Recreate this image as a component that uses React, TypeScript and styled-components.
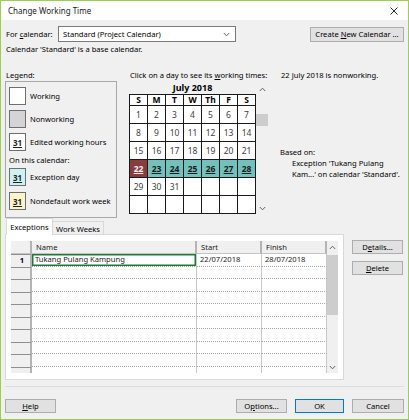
import React from "react";
import styled, { createGlobalStyle, css } from "styled-components";

const GlobalStyle = createGlobalStyle`
  html, body {
    margin: 0;
    padding: 0;
    background: #ffffff;
  }
  body {
    font-family: "Noto Sans", "Liberation Sans", Arial, sans-serif;
  }
`;

const Window = styled.div`
  width: 409px;
  height: 420px;
  box-sizing: border-box;
  border: 1px solid #9bcf53;
  background: #f0f0f0;
  display: flex;
  flex-direction: column;
  font-size: 7.6px;
  color: #000;
  overflow: hidden;
`;

const TitleBar = styled.div`
  height: 19px;
  flex: none;
  background: #ffffff;
  display: flex;
  align-items: center;
  justify-content: space-between;
  padding: 0 10px 0 7px;
  font-size: 8px;
  color: #1a1a1a;
`;

const Body = styled.div`
  flex: 1;
  display: flex;
  flex-direction: column;
  padding: 6px 4px 0 4px;
`;

const CalendarPicker = styled.div`
  display: flex;
  align-items: center;
  height: 16px;
`;

const FieldLabel = styled.span`
  margin-left: 1px;
  width: 52px;
`;

const Select = styled.div`
  width: 178px;
  height: 16px;
  box-sizing: border-box;
  background: #fff;
  border: 1px solid #7a7a7a;
  display: flex;
  align-items: center;
  justify-content: space-between;
  padding: 0 5px 0 4px;
`;

const Button = styled.div<{ $width?: number; $focused?: boolean; $height?: number }>`
  width: ${(p) => p.$width ?? 51}px;
  height: ${(p) => p.$height ?? 14}px;
  box-sizing: border-box;
  background: #e1e1e1;
  border: 1px solid ${(p) => (p.$focused ? "#0078d7" : "#adadad")};
  display: flex;
  align-items: center;
  justify-content: center;
  color: #000;
  flex: none;
  white-space: nowrap;
`;

const PushRight = styled.div`
  margin-left: auto;
`;

const InfoLine = styled.div`
  margin: 2px 0 0 1px;
  line-height: 10px;
`;

const MainArea = styled.div`
  display: flex;
  margin-top: 16px;
`;

const LegendColumn = styled.div`
  width: 112px;
  flex: none;
`;

const Caption = styled.div`
  line-height: 10px;
  padding-left: 1px;
`;

const LegendBox = styled.div`
  margin-top: 1px;
  height: 137px;
  box-sizing: border-box;
  border: 1px solid #a8a8a8;
  padding: 5px 3px 0 3px;
`;

const LegendItem = styled.div<{ $gap?: number }>`
  display: flex;
  align-items: center;
  gap: 4px;
  margin-top: ${(p) => p.$gap ?? 0}px;
  height: 18px;
`;

const Swatch = styled.div<{ $bg: string }>`
  width: 17px;
  height: 18px;
  box-sizing: border-box;
  border: 1px solid #6e6e6e;
  background: ${(p) => p.$bg};
  display: flex;
  align-items: center;
  justify-content: center;
  font-weight: bold;
  font-size: 8px;
  color: #1f1f1f;
  text-decoration: underline;
  text-decoration-thickness: 1px;
`;

const SubCaption = styled.div`
  margin-top: 4px;
  line-height: 10px;
`;

const CalendarColumn = styled.div`
  margin-left: 12px;
  width: 141px;
  flex: none;
`;

const CalendarRow = styled.div`
  display: flex;
  margin-top: 3px;
`;

const CalendarBlock = styled.div`
  width: 127px;
`;

const MonthTitle = styled.div`
  height: 11px;
  line-height: 10px;
  text-align: center;
  font-weight: bold;
  font-size: 9px;
`;

const MonthGrid = styled.div`
  display: grid;
  grid-template-columns: repeat(7, 17px);
  grid-template-rows: 10px repeat(6, 17px);
  gap: 1px;
  padding: 1px;
  background: #1a1a1a;
`;

const DayHead = styled.div`
  background: #fff;
  font-weight: bold;
  font-size: 8.5px;
  line-height: 10px;
  text-align: center;
`;

type DayKind = "normal" | "exception" | "selected";

const DayCell = styled.div<{ $kind: DayKind }>`
  background: #fff;
  font-size: 8.5px;
  line-height: 17px;
  text-align: center;
  color: #404040;
  ${(p) =>
    p.$kind === "exception" &&
    css`
      background: #73c1bc;
      color: #1a1a1a;
      font-weight: bold;
      text-decoration: underline;
    `}
  ${(p) =>
    p.$kind === "selected" &&
    css`
      background: #8b3b3b;
      color: #f4f4f4;
      font-weight: bold;
      text-decoration: underline;
    `}
`;

const ScrollBar = styled.div<{ $width: number }>`
  width: ${(p) => p.$width}px;
  display: flex;
  flex-direction: column;
  align-items: center;
  flex: none;
`;

const ScrollArrow = styled.div<{ $height: number }>`
  height: ${(p) => p.$height}px;
  width: 100%;
  display: flex;
  align-items: center;
  justify-content: center;
  flex: none;
`;

const ScrollThumb = styled.div<{ $top: number; $height: number }>`
  margin-top: ${(p) => p.$top}px;
  height: ${(p) => p.$height}px;
  width: 100%;
  background: #cdcdcd;
  flex: none;
`;

const ScrollSpacer = styled.div`
  flex: 1;
`;

const InfoColumn = styled.div`
  margin-left: 10px;
  flex: 1;
`;

const BasedOn = styled.div`
  margin-top: 67px;
  line-height: 11px;
`;

const Indented = styled.div`
  padding-left: 12px;
  line-height: 11px;
`;

const LowerArea = styled.div`
  display: flex;
`;

const TabsColumn = styled.div`
  width: 339px;
  flex: none;
`;

const TabStrip = styled.div`
  height: 16px;
  display: flex;
  align-items: flex-end;
  padding-left: 1px;
  position: relative;
  z-index: 1;
`;

const Tab = styled.div<{ $active?: boolean }>`
  box-sizing: border-box;
  border: 1px solid #d9d9d9;
  display: flex;
  align-items: center;
  justify-content: center;
  ${(p) =>
    p.$active
      ? css`
          width: 47px;
          height: 17px;
          margin-bottom: -1px;
          background: #fff;
          border-bottom: none;
        `
      : css`
          width: 51px;
          height: 13px;
          background: #f0f0f0;
          border-left: none;
          border-bottom: none;
          padding-top: 1px;
        `}
`;

const TabPanel = styled.div`
  height: 146px;
  box-sizing: border-box;
  background: #fff;
  border: 1px solid #d9d9d9;
  padding: 6px 4px 0 5px;
`;

const Table = styled.div`
  display: flex;
  height: 132px;
  overflow: hidden;
`;

const TableBody = styled.div`
  width: 316px;
  flex: none;
`;

const Row = styled.div<{ $header?: boolean }>`
  display: grid;
  grid-template-columns: 21px 165px 65px 65px;
  height: ${(p) => (p.$header ? 13 : 12.5)}px;
`;

const HeadCell = styled.div`
  background: #f0f0f0;
  border-right: 2px solid #b4b4b4;
  border-bottom: 1px solid #c4c4c4;
  box-sizing: border-box;
  padding-left: 4px;
  line-height: 12px;
  color: #1a1a1a;
`;

const RowHeadCell = styled.div`
  background: #f0f0f0;
  border-top: 1px solid #8f8f8f;
  border-right: 2px solid #b4b4b4;
  box-sizing: border-box;
  text-align: right;
  padding-right: 6px;
  font-weight: bold;
  line-height: 11px;
`;

const DataCell = styled.div<{ $selected?: boolean }>`
  border-bottom: 1px dotted #a8a8a8;
  border-right: 1px solid #c8c8c8;
  box-sizing: border-box;
  padding-left: 3px;
  line-height: 11px;
  color: #222;
  white-space: nowrap;
  overflow: hidden;
  ${(p) =>
    p.$selected &&
    css`
      box-shadow: inset 0 0 0 1.5px #1f7a3a;
    `}
`;

const TableScroll = styled(ScrollBar)`
  background: #f0f0f0;
`;

const SideButtons = styled.div`
  margin-left: 8px;
  padding-top: 22px;
  display: flex;
  flex-direction: column;
  gap: 7px;
`;

const Separator = styled.div`
  margin-top: 6px;
  height: 1px;
  background: #dcdcdc;
`;

const Footer = styled.div`
  margin-top: 12px;
  display: flex;
  gap: 8px;
`;

const Key = styled.span`
  text-decoration: underline;
`;

const Chevron = ({ up }: { up?: boolean }) => (
  <svg width="7" height="5" viewBox="0 0 7 5">
    <path
      d={up ? "M0.8 4 L3.5 1.2 L6.2 4" : "M0.8 1 L3.5 3.8 L6.2 1"}
      fill="none"
      stroke="#606060"
      strokeWidth="1"
    />
  </svg>
);

const CloseIcon = () => (
  <svg width="8" height="8" viewBox="0 0 8 8">
    <path d="M0.5 0.5 L7.5 7.5 M7.5 0.5 L0.5 7.5" stroke="#111" strokeWidth="0.9" />
  </svg>
);

const weekDays = ["S", "M", "T", "W", "Th", "F", "S"];

const days: (number | null)[] = Array.from({ length: 42 }, (_, i) =>
  i < 31 ? i + 1 : null
);

const dayKind = (d: number | null): DayKind => {
  if (d === 22) return "selected";
  if (d !== null && d > 22 && d <= 28) return "exception";
  return "normal";
};

const exceptions = [
  { name: "Tukang Pulang Kampung", start: "22/07/2018", finish: "28/07/2018" },
];

export default function App() {
  const rows = Array.from({ length: 10 }, (_, i) => exceptions[i]);

  return (
    <>
      <GlobalStyle />
      <Window>
        <TitleBar>
          <span>Change Working Time</span>
          <CloseIcon />
        </TitleBar>
        <Body>
          <CalendarPicker>
            <FieldLabel>
              For <Key>c</Key>alendar:
            </FieldLabel>
            <Select>
              <span>Standard (Project Calendar)</span>
              <Chevron />
            </Select>
            <PushRight />
            <Button $width={94} $height={15}>
              <span>
                Create <Key>N</Key>ew Calendar ...
              </span>
            </Button>
          </CalendarPicker>
          <InfoLine>Calendar 'Standard' is a base calendar.</InfoLine>

          <MainArea>
            <LegendColumn>
              <Caption>Legend:</Caption>
              <LegendBox>
                <LegendItem>
                  <Swatch $bg="#ffffff" />
                  <span>Working</span>
                </LegendItem>
                <LegendItem $gap={5}>
                  <Swatch $bg="#d4d4d4" />
                  <span>Nonworking</span>
                </LegendItem>
                <LegendItem $gap={5}>
                  <Swatch $bg="#ffffff">31</Swatch>
                  <span>Edited working hours</span>
                </LegendItem>
                <SubCaption>On this calendar:</SubCaption>
                <LegendItem $gap={3}>
                  <Swatch $bg="#cdf2f2">31</Swatch>
                  <span>Exception day</span>
                </LegendItem>
                <LegendItem $gap={6}>
                  <Swatch $bg="#fdf5c9">31</Swatch>
                  <span>Nondefault work week</span>
                </LegendItem>
              </LegendBox>
            </LegendColumn>

            <CalendarColumn>
              <Caption>
                Click on a day to see its <Key>w</Key>orking times:
              </Caption>
              <CalendarRow>
                <CalendarBlock>
                  <MonthTitle>July 2018</MonthTitle>
                  <MonthGrid>
                    {weekDays.map((w, i) => (
                      <DayHead key={"h" + i}>{w}</DayHead>
                    ))}
                    {days.map((d, i) => (
                      <DayCell key={i} $kind={dayKind(d)}>
                        {d ?? ""}
                      </DayCell>
                    ))}
                  </MonthGrid>
                </CalendarBlock>
                <ScrollBar $width={12}>
                  <ScrollArrow $height={12}>
                    <Chevron up />
                  </ScrollArrow>
                  <ScrollThumb $top={19} $height={12} />
                  <ScrollSpacer />
                  <ScrollArrow $height={12}>
                    <Chevron />
                  </ScrollArrow>
                </ScrollBar>
              </CalendarRow>
            </CalendarColumn>

            <InfoColumn>
              <Caption>22 July 2018 is nonworking.</Caption>
              <BasedOn>Based on:</BasedOn>
              <Indented>Exception 'Tukang Pulang</Indented>
              <Indented>Kam...' on calendar 'Standard'.</Indented>
            </InfoColumn>
          </MainArea>

          <LowerArea>
            <TabsColumn>
              <TabStrip>
                <Tab $active>Exceptions</Tab>
                <Tab>Work Weeks</Tab>
              </TabStrip>
              <TabPanel>
                <Table>
                  <TableBody>
                    <Row $header>
                      <HeadCell />
                      <HeadCell>Name</HeadCell>
                      <HeadCell>Start</HeadCell>
                      <HeadCell>Finish</HeadCell>
                    </Row>
                    {rows.map((r, i) => (
                      <Row key={i}>
                        <RowHeadCell>{r ? i + 1 : ""}</RowHeadCell>
                        <DataCell $selected={i === 0}>{r?.name}</DataCell>
                        <DataCell>{r?.start}</DataCell>
                        <DataCell>{r?.finish}</DataCell>
                      </Row>
                    ))}
                  </TableBody>
                  <TableScroll $width={11}>
                    <ScrollArrow $height={13}>
                      <Chevron up />
                    </ScrollArrow>
                    <ScrollThumb $top={1} $height={60} />
                    <ScrollSpacer />
                    <ScrollArrow $height={12}>
                      <Chevron />
                    </ScrollArrow>
                  </TableScroll>
                </Table>
              </TabPanel>
            </TabsColumn>
            <SideButtons>
              <Button>
                <span>
                  D<Key>e</Key>tails...
                </span>
              </Button>
              <Button>
                <span>
                  <Key>D</Key>elete
                </span>
              </Button>
            </SideButtons>
          </LowerArea>

          <Separator />
          <Footer>
            <Button>
              <span>
                <Key>H</Key>elp
              </span>
            </Button>
            <PushRight />
            <Button>
              <span>
                O<Key>p</Key>tions...
              </span>
            </Button>
            <Button $width={49} $focused>
              OK
            </Button>
            <Button $width={52}>Cancel</Button>
          </Footer>
        </Body>
      </Window>
    </>
  );
}
